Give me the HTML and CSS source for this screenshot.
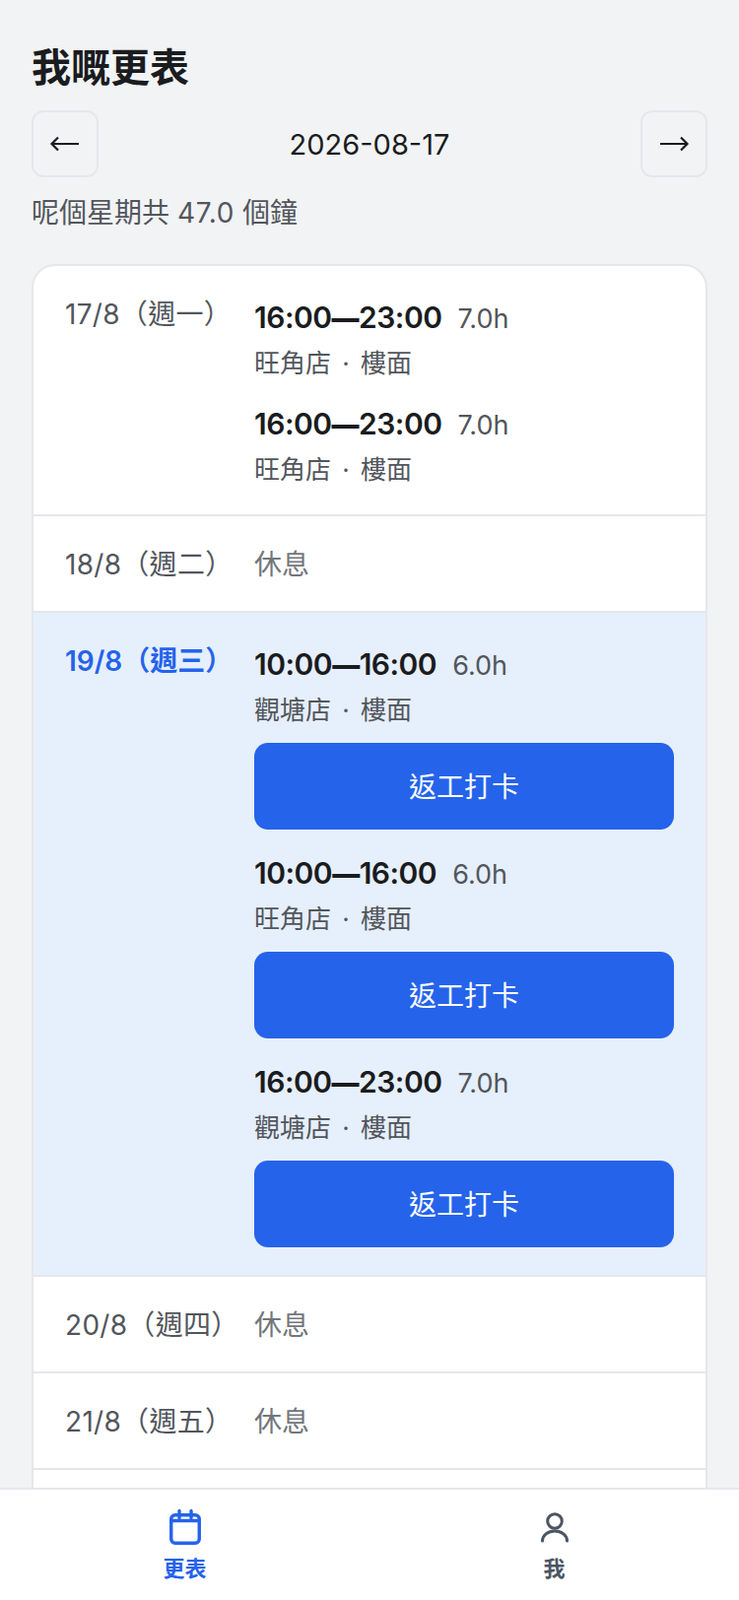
FILE: index.html
```html
<!DOCTYPE html>
<html lang="zh-HK">
<head>
    <meta charset="UTF-8">
    <meta name="viewport" content="width=device-width, initial-scale=1.0">
    <title>我嘅更表</title>
    <link rel="stylesheet" href="styles.css">
</head>
<body>
    <div class="app">
        <main class="content">
            <h1>我嘅更表</h1>

            <!-- 週次切換 -->
            <div class="week-nav">
                <button class="week-btn" aria-label="上一週">
                    <svg viewBox="0 0 32 32" width="32" height="32" fill="none" stroke="currentColor" stroke-width="2.2">
                        <path d="M2.5 16H30M9 9.5 2.5 16 9 22.5"/>
                    </svg>
                </button>
                <span class="week-date">2026-08-17</span>
                <button class="week-btn" aria-label="下一週">
                    <svg viewBox="0 0 32 32" width="32" height="32" fill="none" stroke="currentColor" stroke-width="2.2">
                        <path d="M2 16H29.5M23 9.5 29.5 16 23 22.5"/>
                    </svg>
                </button>
            </div>
            <p class="week-total">呢個星期共 <span class="week-hours">47.0</span> 個鐘</p>

            <!-- 更表 -->
            <div class="schedule">
                <div class="day">
                    <div class="day-label">17/8（週一）</div>
                    <div class="shifts">
                        <div class="shift">
                            <div class="shift-time"><span class="shift-range">16:00<span class="shift-dash">—</span>23:00</span><span class="shift-hours">7.0h</span></div>
                            <div class="shift-place">旺角店 · 樓面</div>
                        </div>
                        <div class="shift">
                            <div class="shift-time"><span class="shift-range">16:00<span class="shift-dash">—</span>23:00</span><span class="shift-hours">7.0h</span></div>
                            <div class="shift-place">旺角店 · 樓面</div>
                        </div>
                    </div>
                </div>
                <div class="day day-off">
                    <div class="day-label">18/8（週二）</div>
                    <div class="rest">休息</div>
                </div>
                <div class="day day-today">
                    <div class="day-label">19/8（週三）</div>
                    <div class="shifts">
                        <div class="shift">
                            <div class="shift-time"><span class="shift-range">10:00<span class="shift-dash">—</span>16:00</span><span class="shift-hours">6.0h</span></div>
                            <div class="shift-place">觀塘店 · 樓面</div>
                            <button class="clock-btn">返工打卡</button>
                        </div>
                        <div class="shift">
                            <div class="shift-time"><span class="shift-range">10:00<span class="shift-dash">—</span>16:00</span><span class="shift-hours">6.0h</span></div>
                            <div class="shift-place">旺角店 · 樓面</div>
                            <button class="clock-btn">返工打卡</button>
                        </div>
                        <div class="shift">
                            <div class="shift-time"><span class="shift-range">16:00<span class="shift-dash">—</span>23:00</span><span class="shift-hours">7.0h</span></div>
                            <div class="shift-place">觀塘店 · 樓面</div>
                            <button class="clock-btn">返工打卡</button>
                        </div>
                    </div>
                </div>
                <div class="day day-off">
                    <div class="day-label">20/8（週四）</div>
                    <div class="rest">休息</div>
                </div>
                <div class="day day-off">
                    <div class="day-label">21/8（週五）</div>
                    <div class="rest">休息</div>
                </div>
            </div>
        </main>

        <!-- 底部導航 -->
        <nav class="tabbar">
            <a class="tab tab-active">
                <svg viewBox="0 0 40 40" width="40" height="40" fill="none" stroke="currentColor" stroke-width="3.4" stroke-linecap="round" stroke-linejoin="round">
                    <rect x="5.75" y="7.75" width="28.5" height="28.5" rx="4"/>
                    <path d="M5.75 13.5h28.5M14 3.5v7M26 3.5v7"/>
                </svg>
                更表
            </a>
            <a class="tab">
                <svg viewBox="0 0 40 40" width="40" height="40" fill="none" stroke="currentColor" stroke-width="3" stroke-linecap="round" stroke-linejoin="round">
                    <circle cx="20" cy="14" r="7.3"/>
                    <path d="M7.5 34A12.5 10 0 0 1 32.5 34"/>
                </svg>
                我
            </a>
        </nav>
    </div>
</body>
</html>
```
FILE: styles.css
```css
/* 基礎樣式 */
* {
    box-sizing: border-box;
}

body {
    margin: 0;
    background: #f2f3f5;
    font-family: Inter, 'Noto Sans CJK TC', sans-serif;
    color: #1a1c20;
}

.app {
    height: 100vh;
    display: flex;
    flex-direction: column;
}

.content {
    flex: 1;
    min-height: 0;
    overflow: hidden;
    padding: 41px 32px 0;
}

h1 {
    margin: 0;
    font-size: 40px;
    line-height: 56px;
    font-weight: 700;
}

/* 週次切換 */
.week-nav {
    display: flex;
    align-items: center;
    justify-content: space-between;
    margin-top: 15px;
}

.week-btn {
    width: 68px;
    height: 68px;
    padding: 0;
    display: flex;
    align-items: center;
    justify-content: center;
    border: 2px solid #e5e7eb;
    border-radius: 12px;
    background: #f2f3f5;
    color: #1a1c20;
}

.week-date {
    font-size: 29px;
}

.week-total {
    margin: 16px 0 0;
    font-size: 28px;
    line-height: 40px;
    color: #52565c;
}

.week-hours {
    letter-spacing: 0.7px;
}

/* 更表 */
.schedule {
    margin-top: 32px;
    padding-bottom: 40px;
    background: #fff;
    border: 2px solid #e5e7eb;
    border-radius: 24px;
    overflow: hidden;
}

.day {
    display: flex;
    gap: 24px;
    padding: 31px 32px 27px;
    border-bottom: 2px solid #e5e7eb;
}

.day-off {
    padding-bottom: 29px;
}

.day-today {
    background: #e6effc;
}

.day-label {
    width: 168px;
    flex-shrink: 0;
    font-size: 28px;
    line-height: 36px;
    letter-spacing: 0.3px;
    white-space: nowrap;
    color: #52565c;
}

.day-today .day-label {
    color: #2563eb;
    font-weight: 600;
    letter-spacing: 0;
}

.rest {
    font-size: 28px;
    line-height: 36px;
    color: #72767c;
}

.shifts {
    flex: 1;
    display: flex;
    flex-direction: column;
    gap: 22px;
}

.shift-time {
    display: flex;
    align-items: baseline;
    gap: 16px;
    line-height: 42px;
}

.shift-range {
    font-size: 30px;
    font-weight: 600;
    letter-spacing: -0.5px;
}

.shift-dash {
    font-size: 28px;
    font-weight: 900;
    line-height: 1;
}

.shift-hours {
    font-size: 27px;
    color: #52565c;
}

.shift-place {
    margin-top: 6px;
    font-size: 26px;
    line-height: 36px;
    word-spacing: 4px;
    color: #52565c;
}

.clock-btn {
    display: block;
    width: 100%;
    height: 88px;
    margin: 15px 0 1px;
    padding: 0 0 3px;
    border: 0;
    border-radius: 14px;
    background: #2563eb;
    color: #fff;
    font-family: inherit;
    font-size: 28px;
    font-weight: 400;
}

/* 底部導航 */
.tabbar {
    height: 114px;
    flex-shrink: 0;
    display: flex;
    background: #fff;
    border-top: 2px solid #e5e7eb;
}

.tab {
    flex: 1;
    padding-top: 18px;
    display: flex;
    flex-direction: column;
    align-items: center;
    gap: 7px;
    font-size: 22px;
    line-height: 30px;
    font-weight: 600;
    color: #4b5563;
}

.tab-active {
    color: #2563eb;
}
```
